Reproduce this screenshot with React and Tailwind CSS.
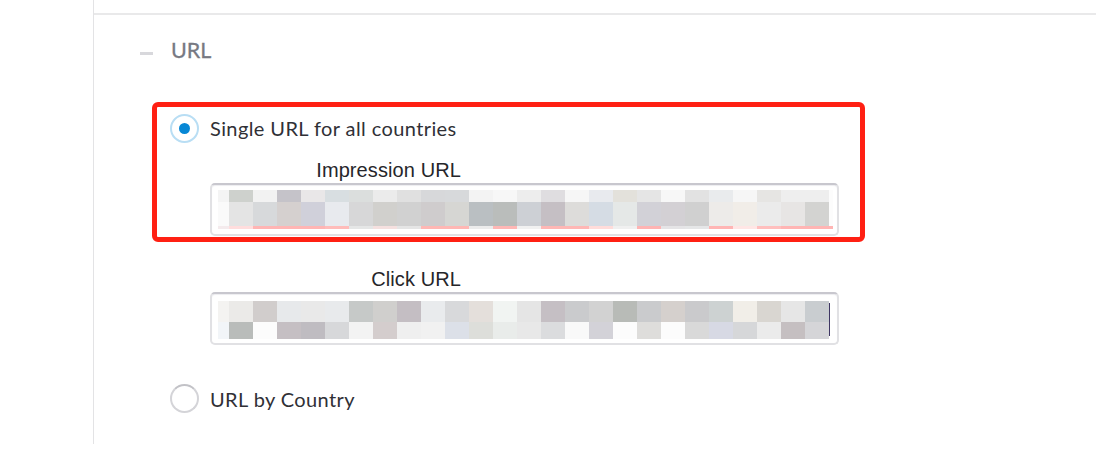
const impressionTop = ['#f4f4f4','#ced1cd','#f2f2f2','#c5c3c9','#e9e7e8','#d8dee1','#dbdedd','#ebebeb','#e0e0e0','#d7d8da','#d7d9db','#f3f3f3','#f7f7f7','#ededed','#dfdde0','#f6f6f6','#e8eaee','#e3e1db','#e5e5e5','#f7f7f7','#e2e2e2','#e9ebed','#f6f6f6','#e6e5e3','#eeeeee','#eeeeee','#fcfcfc'];
const impressionMiddle = ['#fafafa','#e4e4e4','#d7d9db','#d5d0cf','#d0d0da','#e8eaee','#d7d7d8','#d1d0cd','#d1d1d1','#cfcccd','#d6d6d3','#babfc2','#babdbb','#cdd0d5','#c5bfc4','#dddcda','#d5dce4','#e5e8e7','#d2d1d7','#d3d0d4','#d0d0d0','#edebe9','#f1ede8','#ebebeb','#e7e5e4','#d3d3d1','#fcfcfc'];
const impressionBottom = ['#f4ebed','#ffdddd','#ffb5b4','#ffb5b4','#ffb5b4','#ffbcba','#e5e6e6','#f5e0df','#e5e5e5','#ffb7b4','#ffb7b4','#ececec','#ffb7b5','#f1f1f1','#ffb7b5','#ffb7b5','#ffdcda','#f0f0f0','#ffb4b3','#e5e4e6','#e5e6e7','#ffb5b4','#ffe6e5','#ffbfbe','#ffb5b4','#ffb5b4','#ffb5b4'];
const clickTop = ['#f4f3f1','#ebeae8','#d1cdcc','#e7e9eb','#e9e9e9','#e8eaec','#c6c9c8','#d0cfcd','#c4bec3','#e9ebed','#d8d9db','#e4dfdb','#f1f4f2','#e5e5e5','#c5bfc4','#cacbcd','#d2d2d2','#b8bbb7','#cacbcd','#d5d0cd','#cacacc','#cdd2d2','#f1eee8','#d9d6d1','#e6e6e6','#c9cdd0'];
const clickBottom = ['#f2f5f8','#b9bcba','#fcfcfc','#c5bfc3','#bfbcc1','#d7d8da','#f3f3f3','#d4cdcd','#efefef','#f1f1f1','#dce0e8','#dddeda','#e9ecea','#e8e8e8','#dbdcde','#f9f9f9','#d3d2d8','#fcfcfc','#dedddb','#fcfcfc','#d9d9d9','#d7d9e4','#d6d7d9','#ebebeb','#c5bfc1','#d5d5d8'];

function MosaicRow({ colors, height }) {
  return (
    <div className={`flex ${height}`}>
      {colors.map((color, i) => (
        <span
          key={i}
          className={`h-full shrink-0 ${i === 0 ? 'w-[11px]' : i === 26 ? 'w-1' : 'w-6'}`}
          style={{ backgroundColor: color }}
        />
      ))}
    </div>
  );
}

function Field({ label, className, children }) {
  return (
    <div className="w-[629px]">
      <div className="w-[251px] whitespace-nowrap text-right font-['Liberation_Sans',sans-serif] text-[20px] leading-[26px] tracking-[0.1px] text-[#26262a]">
        {label}
      </div>
      <div className={`flex rounded-[5px] border-2 border-[#e1e1e4] border-t-[#c8c7ce] bg-white pl-1.5 shadow-[inset_0_1px_1px_#ededf0] ${className}`}>
        {children}
      </div>
    </div>
  );
}

export default function App() {
  return (
    <main className="h-[451px] w-[1096px] overflow-hidden bg-white pl-[93px] font-['Lato',sans-serif] text-[#303036]">
      <section className="h-[444px] border-l border-[#e3e3e5]">
        <div className="h-[15px] border-b-2 border-[#e9e9ea]" />
        <header className="flex h-[86px] items-start pl-[46px]">
          <span className="mt-[37px] h-[3px] w-[13px] bg-[#d8d8dc]" />
          <h2 className="ml-[18px] mt-[21px] text-[21.5px] font-normal leading-7 text-[#777982] [-webkit-text-stroke:0.3px_#777982]">URL</h2>
        </header>
        <div className="relative ml-[58px] h-[141px] w-[713px]">
          <label className="flex h-[54px] items-center pl-[18px]">
            <span className="flex size-[29px] items-center justify-center rounded-full border-2 border-[#b9def4]">
              <span className="size-[11px] rounded-full bg-[#0787d5]" />
            </span>
            <span className="ml-[11px] whitespace-nowrap text-[20px] leading-7 tracking-[0.4px]">Single URL for all countries</span>
          </label>
          <div className="ml-[58px] mt-[2px]">
            <Field label="Impression URL" className="h-[53px] pt-[5px]">
              <div>
                <MosaicRow colors={impressionTop} height="h-3" />
                <MosaicRow colors={impressionMiddle} height="h-6" />
                <MosaicRow colors={impressionBottom} height="h-[3px]" />
              </div>
            </Field>
          </div>
          <div className="pointer-events-none absolute inset-x-0 bottom-0 top-px rounded-[6px] border-[5px] border-[#ff2013]" />
        </div>
        <div className="ml-[116px] mt-[24px]">
          <Field label="Click URL" className="h-[53px] pt-[7px]">
            <div>
              <MosaicRow colors={clickTop} height="h-[21px]" />
              <MosaicRow colors={clickBottom} height="h-[17px]" />
            </div>
            <span className="mt-[2px] h-[33px] w-px bg-[#3e3663]" />
          </Field>
        </div>
        <label className="mt-[39px] flex items-center pl-[76px]">
          <span className="size-[29px] rounded-full border-2 border-[#d4d4d8] border-t-[#c2c2c7]" />
          <span className="ml-[11px] text-[20px] leading-7 tracking-[0.4px]">URL by Country</span>
        </label>
      </section>
    </main>
  );
}
